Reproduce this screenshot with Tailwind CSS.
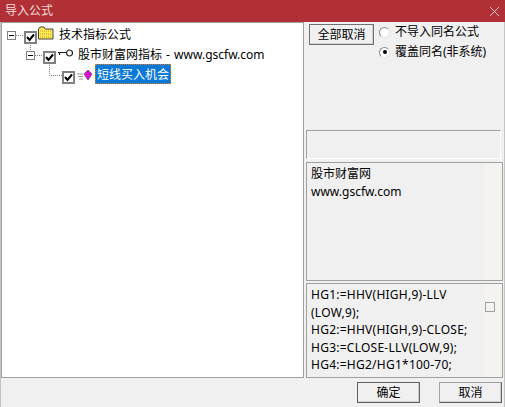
<!DOCTYPE html>
<html lang="zh">
<head>
    <meta charset="UTF-8">
    <title>导入公式</title>
    <script src="https://cdn.jsdelivr.net/npm/@tailwindcss/browser@4"></script>
</head>
<body class="w-[505px] h-[407px] overflow-hidden bg-[#f0f0f0] font-['Noto_Sans','Noto_Sans_CJK_SC',sans-serif] text-[12px] text-black">
    <div class="w-[505px] h-[407px] flex flex-col border-x border-[#c4c4c4]">
        <!-- 标题栏 -->
        <div class="h-[22px] -mx-px shrink-0 bg-[#b03035] flex items-center justify-between pl-[5px] pr-[5px] text-[#f0dcdc]">
            <span>导入公式</span>
            <svg width="11" height="11" viewBox="0 0 11 11" fill="none" stroke="#e8d0d0" stroke-width="1"><path d="M1 1L10 10M10 1L1 10"/></svg>
        </div>
        <div class="h-[356px] shrink-0 flex">
            <!-- 左侧树 -->
            <div class="relative w-[303px] h-[356px] shrink-0 bg-white border border-[#a0a0a0]">
                <svg class="absolute left-0 top-0" width="100" height="70" fill="none" stroke="#808080" stroke-dasharray="1 1">
                    <path d="M14 12.500H22M28.500 20V28M33 32.500H41M47.500 40V52.500H60"/>
                </svg>
                <div class="pt-[4px] leading-[20px]">
                    <div class="flex items-center h-[20px] pl-[5px]">
                        <span class="-translate-y-[2px] w-[9px] h-[9px] border border-[#808080] flex items-center justify-center"><span class="w-[5px] h-px bg-black"></span></span>
                        <span class="ml-[8px] w-[13px] h-[13px] border-2 border-[#808080] bg-white flex items-center justify-center">
                            <svg width="9" height="9" viewBox="0 0 9 9" fill="none" stroke="#000" stroke-width="2"><path d="M1 4L3.500 7L8 1.500"/></svg>
                        </span>
                        <svg class="ml-[1px] -translate-y-[4px]" width="16" height="14" viewBox="0 0 16 14"><path d="M.5 13V3L2 1H6L7.500 3H15V13Z" fill="#ffe850" stroke="#404040"/><path d="M2 5H14M2 8H14M2 11H14" stroke="#b8a030" stroke-dasharray="1 1"/></svg>
                        <span class="ml-[5px] -translate-y-[2px]">技术指标公式</span>
                    </div>
                    <div class="flex items-center h-[20px] pl-[24px]">
                        <span class="-translate-y-[2px] w-[9px] h-[9px] border border-[#808080] flex items-center justify-center"><span class="w-[5px] h-px bg-black"></span></span>
                        <span class="ml-[8px] w-[13px] h-[13px] border-2 border-[#808080] bg-white flex items-center justify-center">
                            <svg width="9" height="9" viewBox="0 0 9 9" fill="none" stroke="#000" stroke-width="2"><path d="M1 4L3.500 7L8 1.500"/></svg>
                        </span>
                        <svg class="ml-[2px] -translate-y-[4px]" width="15" height="8" viewBox="0 0 15 8" fill="none" stroke="#222" stroke-width="1.200"><circle cx="11.500" cy="4" r="3"/><path d="M0 3.500H8M1.500 3.500V6"/></svg>
                        <span class="ml-[5px] -translate-y-[2px] [word-spacing:1px]">股市财富网指标 - www.gscfw.com</span>
                    </div>
                    <div class="flex items-center h-[20px] pl-[60px]">
                        <span class="w-[13px] h-[13px] border-2 border-[#808080] bg-white flex items-center justify-center">
                            <svg width="9" height="9" viewBox="0 0 9 9" fill="none" stroke="#000" stroke-width="2"><path d="M1 4L3.500 7L8 1.500"/></svg>
                        </span>
                        <svg class="ml-[2px] -translate-y-[2px]" width="15" height="12" viewBox="0 0 15 12"><path d="M0 5H6M1 7.500H6M2 10H6" stroke="#999"/><path d="M11 1L15 5L11 11L7 5Z" fill="#e010d0" stroke="#601060" stroke-width=".6"/></svg>
                        <span class="ml-[3px] -translate-y-[3px] h-[20px] leading-[21px] px-[2px] bg-[#0a78d7] text-white outline-1 outline-dotted outline-offset-[-1px] outline-[#e08020]">短线买入机会</span>
                    </div>
                </div>
            </div>
            <!-- 右侧 -->
            <div class="ml-[2px] flex flex-col w-[197px] h-[356px]">
                <div class="h-[108px] flex pl-[3px] pt-[2px] gap-[6px]">
                    <button class="w-[65px] h-[21px] border border-[#707070] bg-[#f0f0f0] shadow-[inset_-1px_-1px_0_#d0d0d0]">全部取消</button>
                    <div class="flex flex-col gap-[4px] -ml-px">
                        <label class="flex items-center h-[16px] gap-[5px]">
                            <span class="w-[11px] h-[11px] rounded-full bg-white border border-t-[#8a8a8a] border-l-[#8a8a8a] border-r-[#e4e4e4] border-b-[#e4e4e4]"></span>不导入同名公式
                        </label>
                        <label class="flex items-center h-[16px] gap-[5px]">
                            <span class="w-[11px] h-[11px] rounded-full bg-white border border-t-[#8a8a8a] border-l-[#8a8a8a] border-r-[#e4e4e4] border-b-[#e4e4e4] flex items-center justify-center"><span class="w-[4px] h-[4px] rounded-full bg-black"></span></span>覆盖同名(非系统)
                        </label>
                    </div>
                </div>
                <div class="w-[195px] h-[29px] border border-[#a0a0a0] border-b-white border-r-white"></div>
                <div class="mt-[3px] h-[119px] border border-[#a0a0a0] flex bg-[#f4f3ef]">
                    <div class="w-[177px] h-full bg-[#f0f0f0] pl-[4px] pt-[2px] leading-[18px]">
                        <div>股市财富网</div>
                        <div>www.gscfw.com</div>
                    </div>
                </div>
                <div class="mt-[2px] h-[95px] border border-[#a0a0a0] flex leading-[17.500px] bg-[#f4f3ef]">
                    <div class="w-[177px] h-full bg-[#f0f0f0] pl-[4px] pt-[2px] tracking-[.25px]">HG1:=HHV(HIGH,9)-LLV (LOW,9);<br>HG2:=HHV(HIGH,9)-CLOSE;<br>HG3:=CLOSE-LLV(LOW,9);<br>HG4:=HG2/HG1*100-70;</div>
                    <span class="ml-[1px] mt-[18px] w-[10px] h-[10px] border border-[#a0a0a0] shrink-0"></span>
                </div>
            </div>
        </div>
        <!-- 底部按钮 -->
        <div class="flex-1 flex justify-end items-start pt-[4px] pr-[2px] gap-[19px]">
            <button class="w-[63px] h-[21px] border border-[#606060] bg-[#f0f0f0] shadow-[inset_-1px_-1px_0_#d0d0d0]">确定</button>
            <button class="w-[63px] h-[21px] border border-[#a0a0a0] border-r-[#606060] border-b-[#606060] bg-[#f0f0f0] shadow-[inset_-1px_-1px_0_#d0d0d0]">取消</button>
        </div>
    </div>
</body>
</html>
